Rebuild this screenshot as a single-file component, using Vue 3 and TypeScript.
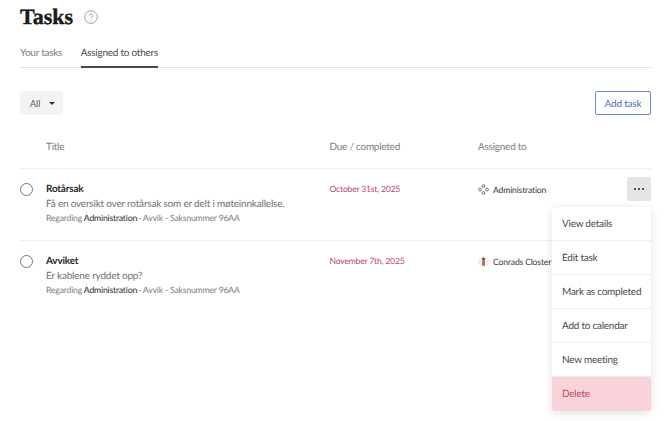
<script setup lang="ts">
import { ref } from 'vue'

type Task = {
    title: string,
    description: string,
    due: string,
    assignee: string,
    kind: 'team' | 'person',
}

const tabs = ['Your tasks', 'Assigned to others']
const activeTab = ref(1)

const tasks: Task[] = [
    {
        title: 'Rotårsak',
        description: 'Få en oversikt over rotårsak som er delt i møteinnkallelse.',
        due: 'October 31st, 2025',
        assignee: 'Administration',
        kind: 'team',
    },
    {
        title: 'Avviket',
        description: 'Er kablene ryddet opp?',
        due: 'November 7th, 2025',
        assignee: 'Conrads Closter',
        kind: 'person',
    },
]

const menuItems = ['View details', 'Edit task', 'Mark as completed', 'Add to calendar', 'New meeting', 'Delete']
</script>

<template>
    <div class="page">
        <header class="heading">
            <h1>Tasks</h1>
            <svg class="help" viewBox="0 0 14 14" width="14" height="14">
                <circle cx="7" cy="7" r="6.3" fill="none" stroke="#8a8a88" stroke-width="0.8" />
                <path d="M5.3 5.6a1.7 1.7 0 1 1 2.6 1.4c-.6.4-.9.7-.9 1.4" fill="none" stroke="#8a8a88" stroke-width="0.8" />
                <circle cx="7" cy="10.2" r="0.5" fill="#8a8a88" />
            </svg>
        </header>

        <nav class="tabs">
            <a
                v-for="(tab, i) in tabs"
                :key="tab"
                class="tab"
                :class="{ active: i === activeTab }"
                @click="activeTab = i"
            >{{ tab }}</a>
        </nav>

        <div class="toolbar">
            <button class="filter">
                <span>All</span>
                <span class="caret"></span>
            </button>
            <button class="add">Add task</button>
        </div>

        <div class="row head">
            <span></span>
            <span>Title</span>
            <span>Due / completed</span>
            <span>Assigned to</span>
        </div>

        <div v-for="(task, i) in tasks" :key="task.title" class="row task">
            <span class="check"></span>
            <div class="info">
                <div class="title">{{ task.title }}</div>
                <div class="desc">{{ task.description }}</div>
                <div class="meta">Regarding <b>Administration</b> · Avvik - Saksnummer 96AA</div>
            </div>
            <div class="due">{{ task.due }}</div>
            <div class="assignee">
                <svg v-if="task.kind === 'team'" viewBox="0 0 12 12" width="11" height="11">
                    <g fill="none" stroke="#555" stroke-width="0.9">
                        <circle cx="6" cy="2.2" r="1.5" />
                        <circle cx="2.1" cy="6" r="1.5" />
                        <circle cx="9.9" cy="6" r="1.5" />
                        <circle cx="6" cy="9.8" r="1.5" />
                    </g>
                </svg>
                <svg v-else viewBox="0 0 12 12" width="11" height="11">
                    <circle cx="6" cy="6" r="6" fill="#f4efec" />
                    <path d="M4.4 10.6V5h3.2v5.6z" fill="#a9765f" />
                    <circle cx="6" cy="3.2" r="1.7" fill="#6d4a3c" />
                </svg>
                <span>{{ task.assignee }}</span>
            </div>
            <button v-if="i === 0" class="more"><i></i><i></i><i></i></button>
        </div>

        <ul class="menu">
            <li v-for="item in menuItems" :key="item" :class="{ danger: item === 'Delete' }">{{ item }}</li>
        </ul>
    </div>
</template>

<style>
html, body {
    margin: 0;
    background: #fff;
    overflow: hidden;
}
</style>

<style scoped>
.page {
    position: relative;
    width: 670px;
    height: 421px;
    box-sizing: border-box;
    padding: 0 19px 0 20px;
    overflow: hidden;
    font-family: Lato, "Open Sans", sans-serif;
    text-rendering: geometricPrecision;
    color: #333;
}
.heading {
    display: flex;
    align-items: center;
    gap: 11px;
    height: 34px;
}
h1 {
    margin: 0;
    font-family: "Liberation Serif", serif;
    font-size: 22px;
    font-weight: 700;
    color: #1a1a1a;
    -webkit-text-stroke: 0.4px #1a1a1a;
}
.tabs {
    display: flex;
    gap: 18.5px;
    margin-top: 8px;
    height: 25px;
    border-bottom: 1px solid #e2e2e0;
}
.tab {
    font-size: 10px;
    letter-spacing: -0.25px;
    line-height: 23px;
    color: #808080;
    height: 24px;
    cursor: pointer;
}
.tab.active {
    color: #4a4a4a;
    border-bottom: 2px solid #4a4a4a;
}
.toolbar {
    display: flex;
    justify-content: space-between;
    margin-top: 23px;
}
button {
    font-family: inherit;
    border: none;
    cursor: pointer;
}
.filter {
    display: flex;
    align-items: center;
    gap: 9px;
    width: 43px;
    height: 24px;
    padding: 0 0 0 10px;
    background: #f4f3f1;
    border-radius: 2px;
    font-size: 9px;
    color: #555;
}
.caret {
    border: 3px solid transparent;
    border-top: 3px solid #333;
    border-bottom: none;
}
.add {
    width: 56px;
    height: 24px;
    background: #fff;
    border: 1px solid #6a85d6;
    border-radius: 2px;
    color: #4a68c2;
    font-size: 10px;
    letter-spacing: -0.2px;
}
.row {
    display: grid;
    grid-template-columns: 26px 283.5px 148.5px 1fr;
    border-bottom: 1px solid #eee;
    position: relative;
}
.head {
    padding: 24.5px 0 14.5px;
    line-height: 14px;
    font-size: 10px;
    letter-spacing: -0.25px;
    color: #808080;
}
.task {
    height: 57px;
    padding-top: 14px;
}
.task:last-of-type {
    border-bottom: none;
}
.check {
    width: 13px;
    height: 13px;
    box-sizing: border-box;
    border: 1px solid #777;
    border-radius: 50%;
}
.title {
    font-size: 10px;
    letter-spacing: -0.2px;
    font-weight: 700;
    line-height: 13px;
    color: #2a2a2a;
}
.desc {
    font-size: 10px;
    letter-spacing: -0.2px;
    line-height: 16px;
    color: #707070;
}
.meta {
    font-size: 8.7px;
    letter-spacing: -0.2px;
    line-height: 12px;
    color: #808080;
}
.meta b {
    font-weight: 400;
    color: #2a2a2a;
}
.due {
    font-size: 8.6px;
    letter-spacing: -0.2px;
    line-height: 12px;
    color: #c04a62;
}
.assignee {
    display: flex;
    align-items: center;
    gap: 4px;
    height: 12px;
    font-size: 8.7px;
    letter-spacing: -0.2px;
    color: #3a3a3a;
}
.more {
    position: absolute;
    right: 0;
    top: 8px;
    display: flex;
    align-items: center;
    justify-content: center;
    gap: 1.6px;
    width: 24px;
    height: 24px;
    padding: 0;
    background: #e6e5e3;
    border-radius: 2px;
}
.more i {
    width: 2.4px;
    height: 2.4px;
    border-radius: 50%;
    background: #222;
}
.menu {
    position: absolute;
    left: 552px;
    top: 207px;
    width: 99px;
    margin: 0;
    padding: 0;
    list-style: none;
    background: #fff;
    border-radius: 3px;
    box-shadow: 0 2px 10px rgba(0, 0, 0, 0.12);
    overflow: hidden;
}
.menu li {
    height: 33px;
    line-height: 35px;
    padding-left: 10px;
    font-size: 10px;
    letter-spacing: -0.25px;
    color: #4a4a4a;
    border-bottom: 1px solid #eee;
}
.menu li.danger {
    background: #f8d3da;
    color: #c04a62;
    border-bottom: none;
    height: 34px;
}
</style>
